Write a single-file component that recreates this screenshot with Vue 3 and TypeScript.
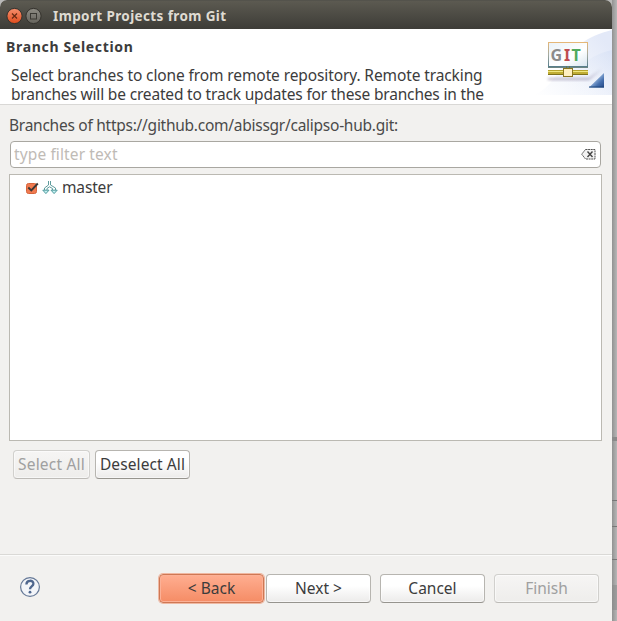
<script setup lang="ts">
import { ref } from 'vue'

interface Branch { name: string; checked: boolean }

const title = 'Import Projects from Git'
const filter = ref('')
const branches = ref<Branch[]>([{ name: 'master', checked: true }])

function setAll(value: boolean): void {
  branches.value.forEach((b) => { b.checked = value })
}
</script>

<template>
  <div class="desktop">
    <section class="window">
      <header class="titlebar">
        <svg class="controls" width="36" height="18" viewBox="0 0 36 18">
          <defs>
            <linearGradient id="closeFill" x1="0" y1="0" x2="0" y2="1">
              <stop offset="0" stop-color="#f6906e" /><stop offset="1" stop-color="#e04c1c" />
            </linearGradient>
            <linearGradient id="maxFill" x1="0" y1="0" x2="0" y2="1">
              <stop offset="0" stop-color="#8d8b83" /><stop offset="1" stop-color="#65635c" />
            </linearGradient>
          </defs>
          <circle cx="8.5" cy="9" r="7.6" fill="url(#closeFill)" stroke="#34322d" />
          <path d="M6 6.5l5 5M11 6.5l-5 5" stroke="#672912" stroke-width="1.2" />
          <circle cx="27.5" cy="9" r="7.6" fill="url(#maxFill)" stroke="#34322d" />
          <rect x="24.5" y="6.5" width="6" height="5.5" fill="none" stroke="#3a3933" />
        </svg>
        <span class="title">{{ title }}</span>
      </header>

      <div class="banner">
        <div class="intro">
          <h1>Branch Selection</h1>
          <p class="l1">Select branches to clone from remote repository. Remote tracking</p>
          <p class="l2">branches will be created to track updates for these branches in the</p>
        </div>
        <svg class="art" width="82" height="66" viewBox="0 0 82 66">
          <defs>
            <linearGradient id="swoosh" x1="0" y1="1" x2="1" y2="0.3">
              <stop offset="0" stop-color="#fff" /><stop offset="0.5" stop-color="#f3f6fc" /><stop offset="1" stop-color="#e3e9f8" />
            </linearGradient>
            <linearGradient id="swoosh2" x1="0" y1="1" x2="1" y2="0">
              <stop offset="0" stop-color="#fff" stop-opacity="0" /><stop offset="1" stop-color="#d3def4" />
            </linearGradient>
            <linearGradient id="frame" x1="0" y1="0" x2="0" y2="1">
              <stop offset="0" stop-color="#e5b778" /><stop offset="0.5" stop-color="#a5aaa0" /><stop offset="1" stop-color="#587e8b" />
            </linearGradient>
            <linearGradient id="panel" x1="0" y1="0" x2="1" y2="1">
              <stop offset="0" stop-color="#eaf2f8" /><stop offset="0.6" stop-color="#fff" /><stop offset="1" stop-color="#d7e5ef" />
            </linearGradient>
            <linearGradient id="corner" x1="0" y1="0" x2="1" y2="1">
              <stop offset="0.3" stop-color="#b7d0ed" /><stop offset="0.7" stop-color="#456fae" /><stop offset="1" stop-color="#254886" />
            </linearGradient>
            <filter id="soft"><feGaussianBlur stdDeviation="1.5" /></filter>
          </defs>
          <path d="M82 1C57 7 43 18 32 36C24 52 14 62 4 66H82Z" fill="url(#swoosh)" />
          <path d="M82 21C60 25 41 43 26 66H82Z" fill="url(#swoosh2)" opacity=".6" />
          <path d="M18 49H59L72 40L59 51H18Z" fill="#776e94" opacity=".55" filter="url(#soft)" />
          <rect x="18.5" y="13.5" width="39" height="24" fill="url(#panel)" stroke="url(#frame)" />
          <text class="git" y="32"><tspan x="20.5" fill="#8b8b8b">G</tspan><tspan x="34" fill="#bf4c50">I</tspan><tspan x="41.5" fill="#4faa5e">T</tspan></text>
          <path d="M18 38.5H58" stroke="#6c8582" />
          <path d="M36.5 37V41M39.5 37V41" stroke="#697851" />
          <path d="M18 41.5H58" stroke="#b8a52c" /><path d="M18 42.5H58" stroke="#f0e77e" />
          <path d="M18 44H58" stroke="#c0ad34" stroke-width="2" /><path d="M18 45.5H58" stroke="#80721c" />
          <rect x="33.5" y="39.5" width="9" height="8" fill="#fff0c1" stroke="#8c7720" />
          <path d="M59 58.5L74 44V58.5Z" fill="url(#corner)" />
          <path d="M59 58H74" stroke="#1d467c" />
        </svg>
      </div>

      <main class="content">
        <label class="caption">Branches of https://github.com/abissgr/calipso-hub.git:</label>
        <div class="search">
          <input v-model="filter" placeholder="type filter text">
          <svg width="15" height="11" viewBox="0 0 15 11">
            <path d="M4.5 .5H14V10H4.5L.7 5.2Z" fill="#f3f3f3" stroke="#555" stroke-dasharray="2 .6" />
            <path d="M6.5 2.5L11.5 8M11.5 2.5L6.5 8" stroke="#444" stroke-width="1.4" />
          </svg>
        </div>
        <div class="list">
          <div v-for="b in branches" :key="b.name" class="row">
            <svg class="check" width="14" height="14" viewBox="0 0 14 14" @click="b.checked = !b.checked">
              <rect x="1.5" y="2.5" width="10" height="10" rx="2" fill="#f07a50" stroke="#d5633a" />
              <path v-if="b.checked" d="M3.3 6.5L6.3 9.5L12.8 2.5" fill="none" stroke="#393734" stroke-width="1.9" />
            </svg>
            <svg class="branch" width="16" height="15" viewBox="0 0 16 15">
              <path d="M6.5 1V5L2.5 8V10M8.5 1V5L13.5 8V10M5 10V8.5L7.5 6.8L10.5 8.5V10" fill="none" stroke="#5f9c9d" />
              <path d="M.8 10.2H7L3.9 13.6ZM9 10.2H15.2L12.1 13.6Z" fill="#c3f2f4" stroke="#4f989b" />
            </svg>
            <span class="name">{{ b.name }}</span>
          </div>
        </div>
        <div class="selection">
          <button class="select" disabled @click="setAll(true)"><span>Select All</span></button>
          <button class="deselect" @click="setAll(false)"><span>Deselect All</span></button>
        </div>
      </main>

      <footer>
        <svg class="help" width="22" height="22" viewBox="0 0 22 22">
          <circle cx="11" cy="11" r="9.4" fill="#f3f5f9" stroke="#667997" stroke-width="1.2" />
          <path d="M7.4 8.5C7.4 3.5 14.7 3.8 14.4 7.8C14.2 10.5 11 10.4 11 13.3" fill="none" stroke="#4f678e" stroke-width="2.3" />
          <circle cx="11" cy="16.2" r="1.4" fill="#4f678e" />
        </svg>
        <div class="nav">
          <button class="back"><span>&lt; Back</span></button>
          <button class="next"><span>Next &gt;</span></button>
          <button class="cancel"><span>Cancel</span></button>
          <button class="finish" disabled><span>Finish</span></button>
        </div>
      </footer>
    </section>
    <aside class="behind"><i class="a" /><i class="b" /><i class="c" /><i class="d" /><i class="e" /></aside>
  </div>
</template>

<style>
body { margin: 0; overflow: hidden; }
</style>

<style scoped>
* { box-sizing: border-box; }
.desktop { width: 617px; height: 621px; display: flex; background: #b9b9b8; font: 15.5px/19px "Noto Sans", "Open Sans", sans-serif; color: #3c3c3c; }
.window { width: 612px; height: 621px; display: flex; flex-direction: column; background: #f2f1ef; border-radius: 7px 7px 0 0; overflow: hidden; }
.titlebar { height: 29px; padding: 1px 0 0 6px; display: flex; align-items: center; border-top: 1px solid #54534c; background: linear-gradient(#5c5a51, #3d3c37); }
.title { margin: 1px 0 0 11px; color: #dfdbd2; font-weight: 700; font-size: 13.5px; letter-spacing: .38px; white-space: nowrap; }
.banner { height: 76px; display: flex; background: #fff; border-bottom: 1px solid #d9d8d6; }
.intro { width: 530px; padding: 8px 0 0 6px; white-space: nowrap; }
h1 { margin: 0 0 10px; font-size: 14px; line-height: 19px; font-weight: 700; letter-spacing: .68px; }
p { margin: 0 0 0 5px; }
.l1 { letter-spacing: -.11px; }
.l2 { letter-spacing: -.175px; }
.art { flex: none; }
.git { font: bold 16px "Noto Sans", "DejaVu Sans", sans-serif; }
.content { height: 449px; padding: 11px 10px 0 9px; display: flex; flex-direction: column; }
.caption { height: 25px; color: #4a4a4a; white-space: nowrap; letter-spacing: -.26px; }
.search { height: 27px; width: 591px; margin-left: 1px; border: 1px solid #a9a7a1; border-radius: 4px; background: #fff; display: flex; align-items: center; padding: 0 4px 0 3px; flex: none; }
input { flex: 1; min-width: 0; height: 21px; margin-top: -1px; border: 0; outline: 0; padding: 0; background: none; font: inherit; letter-spacing: .12px; }
input::placeholder { color: #bfbbb6; opacity: 1; }
.list { width: 593px; height: 267px; margin-top: 6px; border: 1px solid #bbb9b2; background: #fff; padding: 3px 0 0 15px; flex: none; }
.row { display: flex; align-items: center; height: 19px; }
.branch { margin: 0 4px 0 3px; }
.name { letter-spacing: -.15px; }
.selection { display: flex; gap: 5px; margin: 9px 0 0 4px; }
button { height: 29px; padding: 0; border: 1px solid #b7b5b0; border-bottom-color: #96948e; border-radius: 4px; background: linear-gradient(#fff 40%, #ecebea); font: inherit; color: #3c3c3c; white-space: nowrap; box-shadow: inset 0 0 0 1px #fff8; display: flex; align-items: center; justify-content: center; }
button:disabled { color: #a0a0a0; background: linear-gradient(#f6f5f4, #eeedeb); border-color: #d1d0cd; border-bottom-color: #bdbbb7; }
.select { width: 77px; letter-spacing: .2px; }
.deselect { width: 95px; letter-spacing: .1px; }
footer { flex: 1; border-top: 1px solid #dad9d6; box-shadow: inset 0 1px #fbfbfa; display: flex; padding: 19px 13px 0 19px; align-items: flex-start; }
.help { margin-top: 2px; }
.nav { margin-left: 118px; display: flex; }
.nav button { width: 105px; height: 29px; }
.nav .back { border: 1px solid #cf7854; background: linear-gradient(#ffae91, #f58c65); box-shadow: inset 0 0 0 1px #fbb197, 0 0 0 1px #efb8a2; }
.nav .next { margin-left: 2px; }
.nav .cancel, .nav .finish { margin-left: 9px; }
.behind { width: 5px; height: 621px; background: linear-gradient(90deg, #929292, #b7b7b7); display: flex; flex-direction: column; }
.behind i { height: 1px; background: #777; }
.behind .a { margin-top: 437px; height: 4px; background: #8a8a8a; }
.b { margin-top: 59px; }
.c { margin-top: 25px; }
.d { margin-top: 32px; }
.behind .e { margin-top: 25px; height: 25px; background: #8888; }
</style>
